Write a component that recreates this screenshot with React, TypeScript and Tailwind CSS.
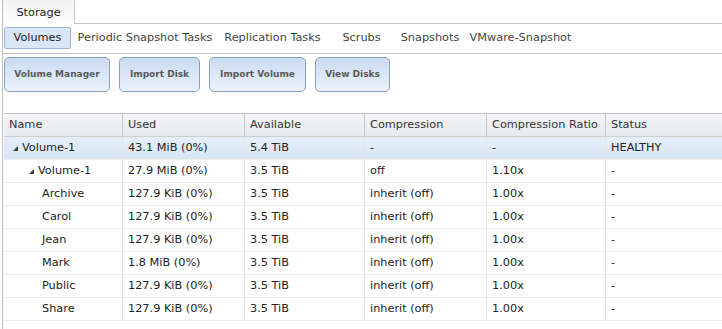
const subTabs = [
  { label: 'Volumes', w: 'w-[67px]', active: true },
  { label: 'Periodic Snapshot Tasks', w: 'w-[148px]' },
  { label: 'Replication Tasks', w: 'w-[107px]' },
  { label: 'Scrubs', w: 'w-[71px]' },
  { label: 'Snapshots', w: 'w-[66px]' },
  { label: 'VMware-Snapshot', w: 'w-[115px]' },
]

const actions = [
  { label: 'Volume Manager', w: 'w-[106px]' },
  { label: 'Import Disk', w: 'w-[81px]' },
  { label: 'Import Volume', w: 'w-[97px]' },
  { label: 'View Disks', w: 'w-[75px]' },
]

const columns = ['Name', 'Used', 'Available', 'Compression', 'Compression Ratio', 'Status']

type Row = {
  name: string
  level: 0 | 1 | 2
  used: string
  avail: string
  comp: string
  ratio: string
  status: string
  selected?: boolean
}

const rows: Row[] = [
  { name: 'Volume-1', level: 0, used: '43.1 MiB (0%)', avail: '5.4 TiB', comp: '-', ratio: '-', status: 'HEALTHY', selected: true },
  { name: 'Volume-1', level: 1, used: '27.9 MiB (0%)', avail: '3.5 TiB', comp: 'off', ratio: '1.10x', status: '-' },
  { name: 'Archive', level: 2, used: '127.9 KiB (0%)', avail: '3.5 TiB', comp: 'inherit (off)', ratio: '1.00x', status: '-' },
  { name: 'Carol', level: 2, used: '127.9 KiB (0%)', avail: '3.5 TiB', comp: 'inherit (off)', ratio: '1.00x', status: '-' },
  { name: 'Jean', level: 2, used: '127.9 KiB (0%)', avail: '3.5 TiB', comp: 'inherit (off)', ratio: '1.00x', status: '-' },
  { name: 'Mark', level: 2, used: '1.8 MiB (0%)', avail: '3.5 TiB', comp: 'inherit (off)', ratio: '1.00x', status: '-' },
  { name: 'Public', level: 2, used: '127.9 KiB (0%)', avail: '3.5 TiB', comp: 'inherit (off)', ratio: '1.00x', status: '-' },
  { name: 'Share', level: 2, used: '127.9 KiB (0%)', avail: '3.5 TiB', comp: 'inherit (off)', ratio: '1.00x', status: '-' },
]

const gridCols = 'grid grid-cols-[119px_122px_120px_122px_119px_1fr]'

function Expander() {
  return (
    <svg width="5" height="5" viewBox="0 0 5 5" className="shrink-0">
      <polygon points="5,0 5,5 0,5" fill="#3a3a3a" />
    </svg>
  )
}

function NameCell({ row }: { row: Row }) {
  if (row.level === 2) {
    return <div className="pl-[38px]">{row.name}</div>
  }
  return (
    <div className={`flex items-center gap-[4px] ${row.level === 0 ? 'pl-[9px]' : 'pl-[25px]'}`}>
      <span className="pt-[1px]">
        <Expander />
      </span>
      <span>{row.name}</span>
    </div>
  )
}

export default function App() {
  return (
    <div className="w-[722px] h-[329px] overflow-hidden bg-white font-['DejaVu_Sans',sans-serif] text-[11.3px] text-[#222]">
      <div className="ml-[2px] h-full border-l border-[#bdbdbd]">
        {/* top tab */}
        <div className="flex h-[24px]">
          <div className="w-[72px] border-r border-[#cacaca] bg-gradient-to-b from-[#f2f2f2] to-white flex items-center justify-center text-[#222] pt-[2px]">
            Storage
          </div>
          <div className="flex-1 border-b border-[#c4c4c4]" />
        </div>

        {/* sub tabs */}
        <div className="flex h-[30px] border-b border-[#c4c4c4] pl-[1px] pt-[3px] text-[#444]">
          {subTabs.map((t) => (
            <div
              key={t.label}
              className={`${t.w} h-[22px] flex items-center justify-center ${
                t.active ? 'bg-[#d9e6f6] border border-[#9bb4d2] rounded-[2px] text-[#222]' : ''
              }`}
            >
              {t.label}
            </div>
          ))}
        </div>

        {/* action buttons */}
        <div className="flex gap-[9px] pl-[1px] pt-[3px]">
          {actions.map((a) => (
            <button
              key={a.label}
              className={`${a.w} h-[35px] rounded-[5px] border border-[#86a0bf] bg-gradient-to-b from-[#cadcf3] to-[#ebf2fb] text-[9px] font-bold text-[#5a5a5a]`}
            >
              {a.label}
            </button>
          ))}
        </div>

        {/* tree grid */}
        <div className="mt-[21px] ml-[1px] border-t border-[#c4c4c4]">
          <div className={`${gridCols} h-[23px] bg-gradient-to-b from-[#f3f4f6] to-[#e8ebef] border-b border-[#cfcfcf] text-[#333]`}>
            {columns.map((c, i) => (
              <div
                key={c}
                className={`flex items-center px-[5px] pt-[1px] ${i < columns.length - 1 ? 'border-r border-[#c6c6c6]' : ''}`}
              >
                {c}
              </div>
            ))}
          </div>
          {rows.map((r, idx) => {
            const cells = [r.used, r.avail, r.comp, r.ratio, r.status]
            return (
              <div
                key={idx}
                className={`${gridCols} h-[23px] border-b border-[#ececec] ${
                  r.selected ? 'bg-gradient-to-b from-[#e6eef9] to-[#d8e6f6]' : ''
                }`}
              >
                <div className="flex items-center border-r border-[#ebe4dc]">
                  <NameCell row={r} />
                </div>
                {cells.map((v, i) => (
                  <div
                    key={i}
                    className={`flex items-center px-[5px] ${i < cells.length - 1 ? 'border-r border-[#ebe4dc]' : ''}`}
                  >
                    {v}
                  </div>
                ))}
              </div>
            )
          })}
        </div>
      </div>
    </div>
  )
}
